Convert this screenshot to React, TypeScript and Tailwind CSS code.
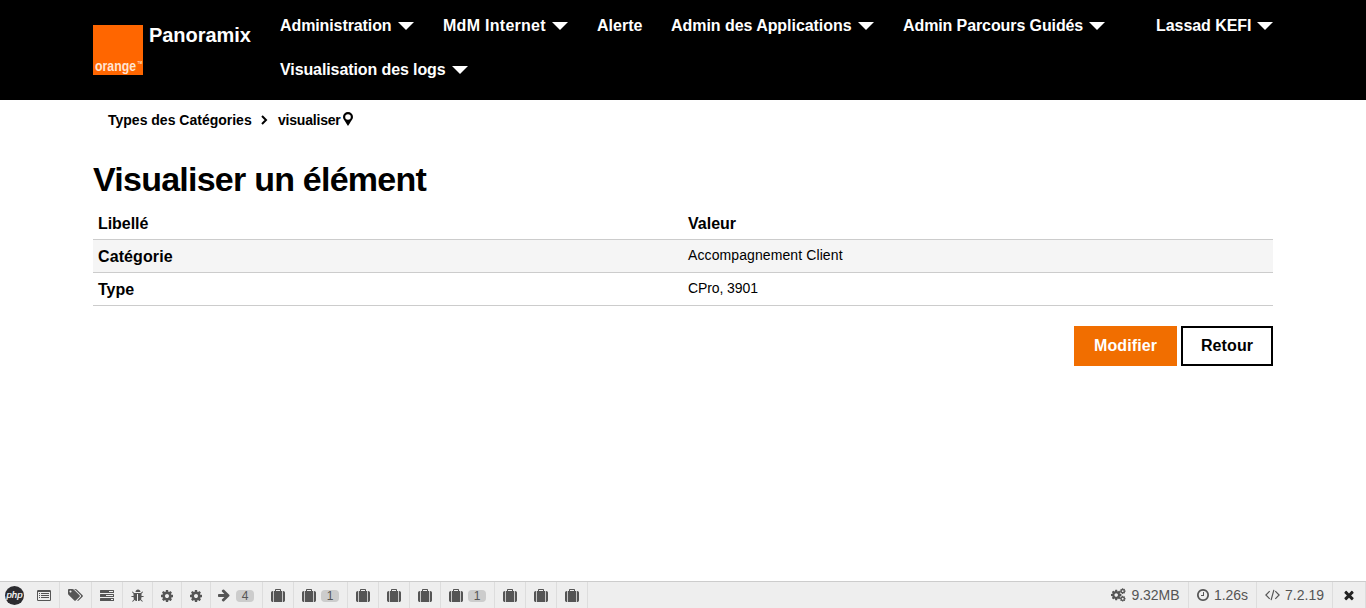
import type { ReactNode } from "react";

const ARROW =
  "M1600 960q0 54-37 91l-651 651q-39 37-91 37-51 0-90-37l-75-75q-38-38-38-91t38-91l293-293h-704q-52 0-84.5-37.5t-32.5-90.5v-128q0-53 32.5-90.5t84.5-37.5h704l-293-294q-38-36-38-90t38-90l75-75q38-38 90-38 53 0 91 38l651 651q37 35 37 90z";
const TIMES =
  "M1490 1322q0 40-28 68l-136 136q-28 28-68 28t-68-28l-294-294-294 294q-28 28-68 28t-68-28l-136-136q-28-28-28-68t28-68l294-294-294-294q-28-28-28-68t28-68l136-136q28-28 68-28t68 28l294 294 294-294q28-28 68-28t68 28l136 136q28 28 28 68t-28 68l-294 294 294 294q28 28 28 68z";
const SUITCASE =
  "M640 256h512v-128h-512v128zm-352 0v1408h-64q-92 0-158-66t-66-158v-960q0-92 66-158t158-66h64zm1120 0v1408h-1024v-1408h128v-160q0-40 28-68t68-28h576q40 0 68 28t28 68v160h128zm384 224v960q0 92-66 158t-158 66h-64v-1408h64q92 0 158 66t66 158z";
const COG =
  "M1152 896q0-106-75-181t-181-75-181 75-75 181 75 181 181 75 181-75 75-181zm512-109v222q0 12-8 23t-20 13l-185 28q-19 54-39 91 35 50 107 138 10 12 10 25t-9 23q-27 37-99 108t-94 71q-12 0-26-9l-138-108q-44 23-91 38-16 136-29 186-7 28-36 28h-222q-14 0-24.5-8.5t-11.5-21.5l-28-184q-49-16-90-37l-141 107q-10 9-25 9-14 0-25-11-126-114-165-168-7-10-7-23 0-12 8-23 15-21 51-66.5t54-70.5q-27-50-41-99l-183-27q-13-2-21-12.5t-8-23.5v-222q0-12 8-23t19-13l186-28q14-46 39-92-40-57-107-138-10-12-10-24 0-10 9-23 26-36 98.5-107.5t94.5-71.5q13 0 26 10l138 107q44-23 91-38 16-136 29-186 7-28 36-28h222q14 0 24.5 8.5t11.5 21.5l28 184q49 16 90 37l142-107q9-9 24-9 13 0 25 10 129 119 165 170 7 8 7 22 0 12-8 23-15 21-51 66.5t-54 70.5q26 50 41 98l183 28q13 2 21 12.5t8 23.5z";
const CLOCK =
  "M1024 544v448q0 14-9 23t-23 9h-320q-14 0-23-9t-9-23v-64q0-14 9-23t23-9h224v-352q0-14 9-23t23-9h64q14 0 23 9t9 23zm416 352q0-148-73-273t-198-198-273-73-273 73-198 198-73 273 73 273 198 198 273 73 273-73 198-198 73-273zm224 0q0 209-103 385.5t-279.5 279.5-385.5 103-385.5-103-279.5-279.5-103-385.5 103-385.5 279.5-279.5 385.5-103 385.5 103 279.5 279.5 103 385.5z";
const BUG =
  "M1632 960q0 26-19 45t-45 19h-224q0 171-67 290l208 209q19 19 19 45t-19 45q-18 19-45 19t-45-19l-198-197q-5 5-15 13t-42 28.5-65 36.5-82 29-97 13v-896h-128v896q-51 0-101.5-13.5t-87-33-66-39-43.5-32.5l-15-14-183 207q-20 21-48 21-24 0-43-16-19-18-20.5-44.5t15.5-46.5l202-227q-58-114-58-274h-224q-26 0-45-19t-19-45 19-45 45-19h224v-294l-173-173q-19-19-19-45t19-45 45-19 45 19l173 173h844l173-173q19-19 45-19t45 19 19 45-19 45l-173 173v294h224q26 0 45 19t19 45zm-416-576h-640q0-133 93.5-226.5t226.500-93.5 226.500 93.500 93.500 226.500z";
const TAGS =
  "M448 448q0-53-37.5-90.5t-90.5-37.5-90.500 37.500-37.500 90.500 37.500 90.500 90.500 37.500 90.500-37.500 37.500-90.500zm1067 576q0 53-37 90l-491 492q-39 37-91 37-53 0-90-37l-715-716q-38-37-64.500-101t-26.500-117v-416q0-52 38-90t90-38h416q53 0 117 26.500t102 64.500l715 714q37 39 37 91zm384 0q0 53-37 90l-491 492q-39 37-91 37-36 0-59-14t-53-45l470-470q37-37 37-90 0-52-37-91l-715-714q-38-38-102-64.500t-117-26.500h224q53 0 117 26.500t102 64.500l715 714q37 39 37 91z";

function Glyph({ d, className = "size-3.5", box = "0 0 1792 1792" }: { d: string; className?: string; box?: string }) {
  return (
    <svg viewBox={box} fill="currentColor" className={`shrink-0 ${className}`}>
      <path d={d} />
    </svg>
  );
}

function ListIcon() {
  return (
    <svg viewBox="0 0 14 11" className="mt-px h-[11px] w-3.5" fill="currentColor">
      <path fillRule="evenodd" d="M1.200 0h11.600Q14 0 14 1.200v8.600Q14 11 12.800 11H1.200Q0 11 0 9.800V1.200Q0 0 1.200 0zM1 2v7.700q0 .3.300.3h11.400q.3 0 .3-.3V2z" />
      <path d="M2 3h1v1H2zM4 3h8v1H4zM2 5h1v1H2zM4 5h8v1H4zM2 7h1v1H2zM4 7h8v1H4z" />
    </svg>
  );
}

function TasksIcon() {
  return (
    <svg viewBox="0 0 14 11" className="mt-px h-[11px] w-3.5" fill="currentColor">
      <path fillRule="evenodd" d="M.5 0h13q.5 0 .5.5v2q0 .5-.5.5H.5Q0 3 0 2.500v-2Q0 0 .5 0zM9 1v1h4V1zM.5 4h13q.5 0 .5.5v2q0 .5-.5.5H.5Q0 7 0 6.500v-2Q0 4 .5 4zM6 5v1h7V5zM.5 8h13q.5 0 .5.5v2q0 .5-.5.5H.5q-.5 0-.5-.5v-2Q0 8 .5 8zM11 9v1h2V9z" />
    </svg>
  );
}

function CogsIcon() {
  return (
    <svg viewBox="0 0 15 14" className="h-3.5 w-[15px] shrink-0" fill="currentColor">
      <path transform="translate(-.9 .9) scale(.0068)" d={COG} />
      <path transform="translate(8.300 -.3) scale(.0038)" d={COG} />
      <path transform="translate(8.300 7.300) scale(.0038)" d={COG} />
    </svg>
  );
}

function CodeIcon() {
  return (
    <svg viewBox="0 0 15 12" className="h-3 w-[15px] shrink-0" fill="none" stroke="currentColor" strokeWidth="1.200">
      <path d="M4.700 2.200.9 6l3.800 3.800M10.300 2.200 14.100 6l-3.800 3.800M8.900.8 6.100 11.200" />
    </svg>
  );
}

function PhpIcon() {
  return (
    <svg viewBox="0 0 19 19" className="size-[19px]">
      <circle cx="9.500" cy="9.500" r="9.500" fill="#2b2b2f" />
      <text x="1.500" y="12" fill="#fff" stroke="#fff" strokeWidth=".2" fontSize="9" fontStyle="italic" fontFamily="Liberation Sans, sans-serif" textLength="16" lengthAdjust="spacingAndGlyphs">
        php
      </text>
    </svg>
  );
}

function Caret() {
  return (
    <svg viewBox="0 0 16 8" className="h-2 w-4 shrink-0" fill="#fff">
      <path d="M0 0h16L8 8z" />
    </svg>
  );
}

function NavItem({ label, width, tracking, caret = true }: { label: string; width: string; tracking: string; caret?: boolean }) {
  return (
    <a className="flex h-11 items-center">
      <span className={`whitespace-nowrap ${width} ${tracking}`}>{label}</span>
      {caret && <Caret />}
    </a>
  );
}

function Cell({ width, children }: { width: string; children?: ReactNode }) {
  return (
    <div className={`flex h-full shrink-0 items-center justify-center border-r border-[#ddd] ${width}`}>{children}</div>
  );
}

function Bag({ count }: { count?: number }) {
  return (
    <Cell width={count ? "w-[54px]" : "w-[31px]"}>
      <Glyph d={SUITCASE} className="mt-px size-3.5" />
      {count && <Badge>{count}</Badge>}
    </Cell>
  );
}

function Badge({ children }: { children: ReactNode }) {
  return (
    <span className="mt-px ml-[5px] flex h-3 w-[18px] items-center justify-center rounded-[4px] bg-[#ccc] text-xs leading-none text-[#555]">
      {children}
    </span>
  );
}

export default function App() {
  return (
    <div className="flex h-[608px] w-full flex-col overflow-hidden bg-white font-['Liberation_Sans',Arial,sans-serif] text-black">
      <header className="h-[100px] shrink-0 bg-black text-base font-bold text-white">
        <div className="mx-auto flex h-full w-[1180px] pt-1">
          <a className="flex w-[187px] shrink-0 pt-[21px]">
            <svg viewBox="0 0 50 50" className="size-[50px] shrink-0">
              <rect width="50" height="50" fill="#ff6600" />
              <text x="2" y="45.500" textLength="41" lengthAdjust="spacingAndGlyphs" fill="#ffe4d2" fontSize="14.500" fontWeight="700" fontFamily="Liberation Sans, sans-serif">
                orange
              </text>
              <text x="44.500" y="39" textLength="4.500" lengthAdjust="spacingAndGlyphs" fill="#ffe0cc" fontSize="4" fontFamily="Liberation Sans, sans-serif">
                TM
              </text>
            </svg>
            <span className="ml-[6px] text-xl leading-5 tracking-[-0.05px]">Panoramix</span>
          </a>
          <nav className="flex w-[870px] flex-wrap content-start gap-x-[29px]">
            <NavItem label="Administration" width="w-[118px]" tracking="tracking-[-0.1px]" />
            <NavItem label="MdM Internet" width="w-[109px]" tracking="tracking-[0.28px]" />
            <NavItem label="Alerte" width="w-[45px]" tracking="tracking-[0px]" caret={false} />
            <NavItem label="Admin des Applications" width="w-[187px]" tracking="tracking-[-0.05px]" />
            <NavItem label="Admin Parcours Guidés" width="w-[186px]" tracking="tracking-[-0.1px]" />
            <NavItem label="Visualisation des logs" width="w-[172px]" tracking="tracking-[-0.1px]" />
          </nav>
          <div className="ml-2">
            <NavItem label="Lassad KEFI" width="w-[101px]" tracking="tracking-[-0.05px]" />
          </div>
        </div>
      </header>

      <main className="mx-auto w-[1180px] flex-1">
        <div className="flex h-10 items-center pl-[15px] text-sm font-bold">
          <span className="w-[153px] whitespace-nowrap">Types des Catégories</span>
          <svg viewBox="0 0 7 10" className="h-2.5 w-[7px]" fill="none" stroke="#000" strokeWidth="2">
            <path d="m1 1 4 4-4 4" />
          </svg>
          <span className="ml-[10px] w-[65px] tracking-[-0.2px] whitespace-nowrap">visualiser</span>
          <svg viewBox="0 0 10 14" className="-mt-0.5 h-3.5 w-2.5">
            <path fillRule="evenodd" d="M5 0a5 5 0 0 1 5 5c0 2-1.600 3.500-3.200 6.200L5 14l-1.800-2.800C1.600 8.500 0 7 0 5a5 5 0 0 1 5-5zm0 2.200a2.800 2.800 0 1 0 0 5.600 2.800 2.800 0 0 0 0-5.600z" />
          </svg>
        </div>
        <h1 className="mt-[19px] h-[47px] text-[34px] leading-[40px] font-bold tracking-[-0.76px]">Visualiser un élément</h1>
        <table className="w-full table-fixed border-collapse text-left text-base">
          <thead>
            <tr className="h-[33px] border-b border-[#ccc]">
              <th className="px-[5px] pt-[3px] pb-0 leading-5 tracking-[-0.05px]">Libellé</th>
              <th className="px-[5px] pt-[3px] pb-0 leading-5">Valeur</th>
            </tr>
          </thead>
          <tbody>
            <tr className="h-[33px] border-b border-[#ccc] bg-[#f5f5f5]">
              <th className="px-[5px] pt-0.5 pb-0 leading-5 tracking-[0.1px]">Catégorie</th>
              <td className="px-[5px] pt-0 pb-0.5 text-sm tracking-[0.1px]">Accompagnement Client</td>
            </tr>
            <tr className="h-[33px] border-b border-[#ccc]">
              <th className="px-[5px] pt-0.5 pb-0 leading-5">Type</th>
              <td className="px-[5px] pt-0 pb-0.5 text-sm tracking-[-0.1px]">CPro, 3901</td>
            </tr>
          </tbody>
        </table>
        <div className="mt-5 flex justify-end gap-1 text-base font-bold tracking-[0.1px]">
          <button className="h-10 w-[103px] bg-[#f16e00] text-white">Modifier</button>
          <button className="h-10 w-[92px] border-2 border-black">Retour</button>
        </div>
      </main>

      <footer className="flex h-[27px] shrink-0 items-center border-t border-[#ccc] bg-[#eee] text-[#555]">
        <div className="flex h-full w-[29px] shrink-0 items-center justify-center">
          <PhpIcon />
        </div>
        <Cell width="w-[31px]"><ListIcon /></Cell>
        <Cell width="w-8"><Glyph d={TAGS} box="0 0 1920 1792" className="h-3.5 w-[15px]" /></Cell>
        <Cell width="w-[31px]"><TasksIcon /></Cell>
        <Cell width="w-[30px]"><Glyph d={BUG} className="mt-px size-3.5" /></Cell>
        <Cell width="w-[29px]"><Glyph d={COG} className="mt-px size-3.5" /></Cell>
        <Cell width="w-[29px]"><Glyph d={COG} className="mt-px size-3.5" /></Cell>
        <Cell width="w-[52px] pr-0.5">
          <Glyph d={ARROW} />
          <Badge>4</Badge>
        </Cell>
        <Bag />
        <Bag count={1} />
        <Bag />
        <Bag />
        <Bag />
        <Bag count={1} />
        <Bag />
        <Bag />
        <Bag />
        <div className="ml-auto flex h-full text-sm">
          <Cell width="w-[85px] pr-px"><CogsIcon /><span className="ml-[5px]">9.32MB</span></Cell>
          <Cell width="w-[68px] pr-px"><Glyph d={CLOCK} /><span className="ml-1">1.26s</span></Cell>
          <Cell width="w-[76px]"><CodeIcon /><span className="ml-[5px]">7.2.19</span></Cell>
          <Cell width="w-[33px]"><Glyph d={TIMES} className="-mt-px size-3.5 text-[#222]" /></Cell>
        </div>
      </footer>
    </div>
  );
}
